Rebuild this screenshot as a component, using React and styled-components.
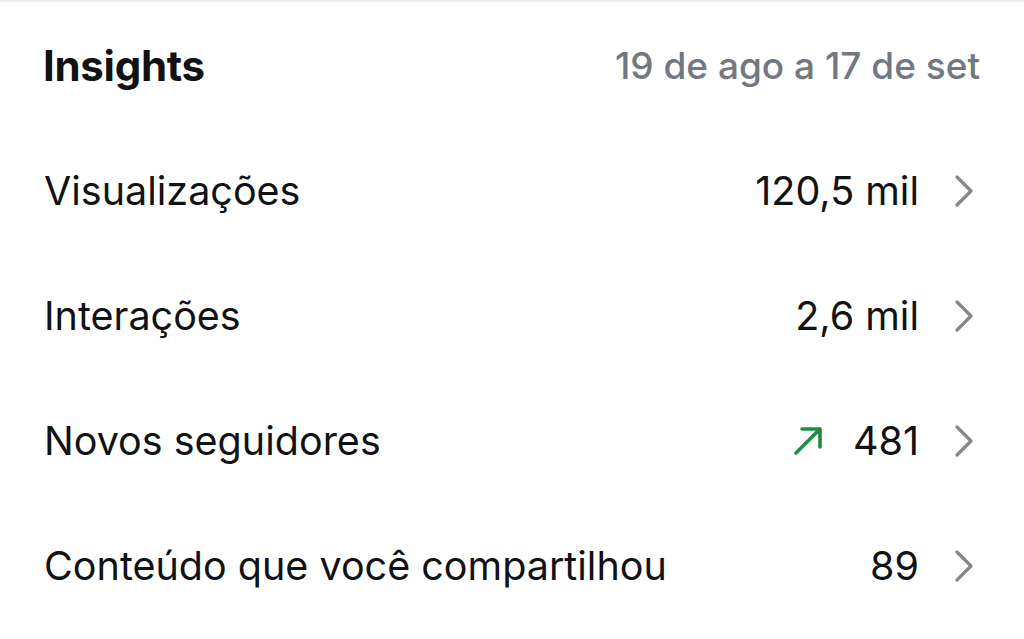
import React from 'react';
import styled, { createGlobalStyle } from 'styled-components';

const GlobalStyle = createGlobalStyle`
  html, body {
    margin: 0;
    padding: 0;
    background: #ffffff;
  }
  body {
    font-family: Inter, "Noto Sans", "Liberation Sans", sans-serif;
    -webkit-font-smoothing: antialiased;
  }
`;

const Panel = styled.section`
  width: 1024px;
  height: 639px;
  border-top: 2px solid #ececee;
  box-sizing: border-box;
  background: #fff;
  overflow: hidden;
`;

const Header = styled.header`
  height: 126px;
  display: flex;
  align-items: center;
  justify-content: space-between;
  padding: 0 44px 0 43px;
`;

const Title = styled.h2`
  margin: 0;
  font-size: 42px;
  font-weight: 700;
  color: #111214;
  letter-spacing: -0.3px;
`;

const Range = styled.span`
  font-size: 37px;
  font-weight: 500;
  color: #737780;
`;

const Row = styled.div`
  height: 125px;
  display: flex;
  align-items: center;
  padding: 0 51px 0 44px;
  font-size: 39.5px;
  color: #111214;
`;

const Label = styled.span`
  flex: 1;
`;

const Value = styled.span`
  display: flex;
  align-items: center;
  gap: 30px;
`;

const Chevron = styled.svg`
  width: 18px;
  height: 34px;
  margin-left: 36px;
  flex-shrink: 0;
`;

const Trend = styled.svg`
  width: 30px;
  height: 30px;
`;

const ChevronIcon = () => (
  <Chevron viewBox="0 0 18 34" fill="none">
    <path d="M2 3 L16 17 L2 31" stroke="#86878c" strokeWidth="3.2" strokeLinecap="round" strokeLinejoin="round" />
  </Chevron>
);

const TrendUp = () => (
  <Trend viewBox="0 0 30 30" fill="none">
    <path d="M3 27 L27 3 M9 3 H27 V21" stroke="#1f8c45" strokeWidth="3.6" strokeLinecap="round" strokeLinejoin="round" />
  </Trend>
);

const metrics = [
  { label: 'Visualizações', value: '120,5 mil' },
  { label: 'Interações', value: '2,6 mil' },
  { label: 'Novos seguidores', value: '481', up: true },
  { label: 'Conteúdo que você compartilhou', value: '89' },
];

export default function App() {
  return (
    <>
      <GlobalStyle />
      <Panel>
        <Header>
          <Title>Insights</Title>
          <Range>19 de ago a 17 de set</Range>
        </Header>
        {metrics.map((m) => (
          <Row key={m.label}>
            <Label>{m.label}</Label>
            <Value>
              {m.up && <TrendUp />}
              {m.value}
            </Value>
            <ChevronIcon />
          </Row>
        ))}
      </Panel>
    </>
  );
}
